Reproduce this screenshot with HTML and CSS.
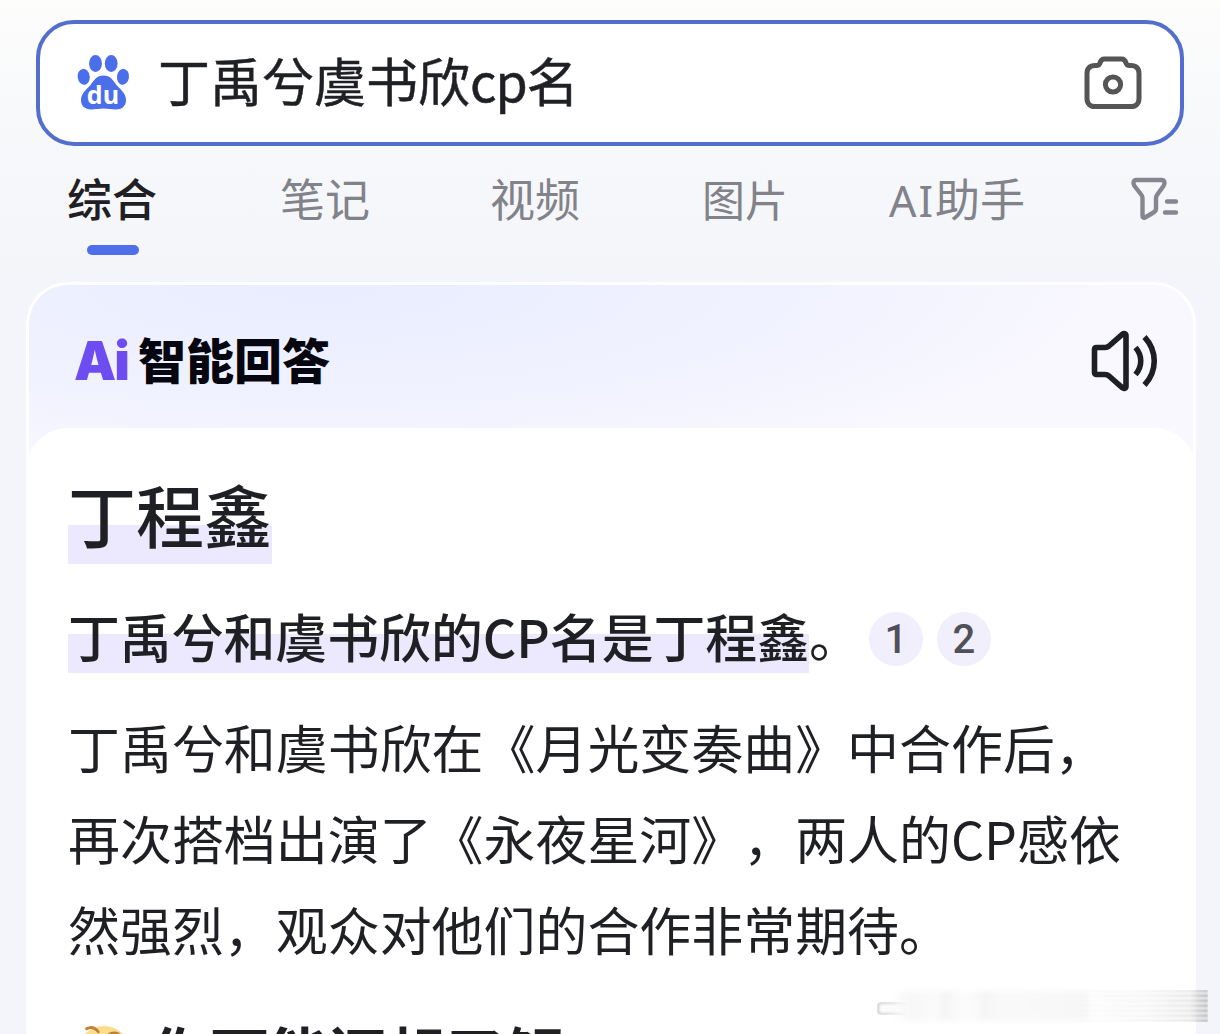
FILE: index.html
```html
<!DOCTYPE html>
<html lang="zh-CN">
<head>
<meta charset="utf-8">
<title>丁禹兮虞书欣cp名</title>
<link rel="stylesheet" href="styles.css">
</head>
<body>
<header class="search">
  <svg class="paw" width="54" height="58" viewBox="0 0 54 58">
    <g fill="#4b6eea">
      <ellipse cx="18.5" cy="9.5" rx="6.4" ry="8.4"/>
      <ellipse cx="34.2" cy="9.5" rx="6.4" ry="8.4"/>
      <ellipse cx="6.7" cy="22.8" rx="6" ry="8" transform="rotate(-8 6.7 22.8)"/>
      <ellipse cx="46" cy="22.8" rx="6" ry="8" transform="rotate(8 46 22.8)"/>
      <path d="M26.5 21.5c7 0 9.500 5 13 9.500 4 4.500 9.500 8.500 9.500 15 0 6.500-4.500 9.500-10 9.500-4.500 0-8-1-12.500-1s-8 1-12.500 1c-6 0-10-3.500-10-9.500 0-6.500 5.500-10.500 9.500-15 3.500-4.500 6-9.500 13-9.500z"/>
    </g>
    <text class="paw-text" x="26" y="50" text-anchor="middle">du</text>
  </svg>
  <div class="query">丁禹兮虞书欣<span class="query-latin">cp</span>名</div>
  <svg class="camera" width="60" height="56" viewBox="0 0 60 56" fill="none" stroke="#555" stroke-width="5">
    <path d="M12 10.500h1.500c2 0 3-1 3.500-2.500 .8-3 2-4 4.500-4h17c2.500 0 3.700 1 4.500 4 .5 1.500 1.500 2.500 3.500 2.500H48c5 0 8 3 8 8v25c0 5-3 8-8 8H12c-5 0-8-3-8-8v-25c0-5 3-8 8-8z" stroke-linejoin="round"/>
    <circle cx="30" cy="29.500" r="7.600"/>
  </svg>
</header>
<nav class="tabs">
  <div class="tab active">综合</div>
  <div class="tab">笔记</div>
  <div class="tab">视频</div>
  <div class="tab pics">图片</div>
  <div class="tab"><span class="tab-latin">AI</span>助手</div>
  <svg class="filter" width="50" height="46" viewBox="0 0 50 46" fill="none" stroke="#85868f" stroke-width="4.400" stroke-linecap="round" stroke-linejoin="round">
    <path d="M6.500 4h25c3 0 4 3 2 6l-6.500 9c-1 1.300-1 2-1 3.500v10c0 2-.6 3-2.500 4l-8.500 5c-1.500.8-2.500.2-2.500-1.500V22.500c0-1.500 0-2.200-1-3.500L4.500 10C2.500 7 3.500 4 6.500 4z"/>
    <path d="M37 25.500h9M35 36.500h11"/>
  </svg>
</nav>
<main class="card">
  <div class="card-head">
    <div class="brand"><span class="brand-ai">Ai</span><span class="brand-name">智能回答</span></div>
    <svg class="speaker" width="70" height="64" viewBox="0 0 70 64" fill="none" stroke="#1e1f24" stroke-width="5.600">
      <path d="M6.500 18.500h8.500c1.800 0 2.800-.5 4-1.500L32.500 5.200c1.300-1.200 3.500-.7 3.500 1.500v50.600c0 2.200-2.200 2.700-3.500 1.500L19 47c-1.200-1-2.200-1.500-4-1.500H6.500c-1.300 0-2-.7-2-2v-23c0-1.300.7-2 2-2z" stroke-linejoin="round"/>
      <path d="M45.500 18.500c7 8 7 19 0 27M54.500 8c13 14 13 34 0 48"/>
    </svg>
  </div>
  <section class="answer">
    <h1 class="title">丁程鑫</h1>
    <div class="lead">
      <strong class="mark">丁禹兮和虞书欣的CP名是丁程鑫</strong><span>。</span>
      <span class="ref">1</span><span class="ref">2</span>
    </div>
    <p class="text">丁禹兮和虞书欣在《月光变奏曲》中合作后，<br>再次搭档出演了《永夜星河》，两人的CP感依<br>然强烈，观众对他们的合作非常期待。</p>
    <div class="related">
      <svg class="emoji" width="54" height="54" viewBox="0 0 56 56">
        <defs><radialGradient id="face" cx=".5" cy=".45" r=".55"><stop offset="0" stop-color="#ffe9a0"/><stop offset=".8" stop-color="#fbdc8a"/><stop offset="1" stop-color="#eeb65a"/></radialGradient></defs>
        <circle cx="28" cy="28" r="27" fill="url(#face)"/>
        <path d="M10 4c5-3 9-1 12 3M33 10c4-3 9-2 12 1" fill="none" stroke="#c08238" stroke-width="3" stroke-linecap="round"/>
        <circle cx="19" cy="22" r="4" fill="#6b421c"/><circle cx="39" cy="22" r="4" fill="#6b421c"/>
      </svg>
      <h2 class="related-title">你可能还想了解</h2>
    </div>
  </section>
</main>
<div class="smudge"><i class="smudge-cap"></i><i class="smudge-body"></i><i class="smudge-end"></i></div>
</body>
</html>
```
FILE: styles.css
```css
* { box-sizing: border-box; }
body {
  margin: 0;
  height: 1034px;
  overflow: hidden;
  padding: 20px 24px 0 26px;
  background: linear-gradient(#fdfdfc 0, #f8f9fb 100px, #f5f6f9 240px, #f4f5fa 300px);
  color: #1f2024;
  font-family: "Noto Sans CJK SC", sans-serif;
  text-spacing-trim: space-all;
}
.search {
  display: flex;
  align-items: center;
  height: 126px;
  margin: 0 12px 0 10px;
  padding: 0 37px 0 36px;
  border: 4px solid #526fcd;
  border-radius: 38px;
  background: #fff;
}
.paw { flex: none; margin-left: 1px; }
.paw-text { font: 700 25px "Open Sans", sans-serif; fill: #fff; }
.query {
  flex: 1;
  margin-left: 27px;
  font-size: 52px;
  line-height: 80px;
  white-space: nowrap;
  margin-top: -6px;
  -webkit-text-stroke: .5px #1f2024;
}
.query-latin { letter-spacing: -1px; }
.camera { flex: none; }
.tabs {
  display: grid;
  grid-template-columns: 213px 210px 212px 187px 240px 60px;
  height: 109px;
  margin: 0 0 27px 41px;
  padding-top: 21px;
}
.tab {
  height: 88px;
  color: #81828a;
  font-size: 45px;
  line-height: 62px;
  white-space: nowrap;
}
.pics { font-size: 43px; }
.tab-latin { font-family: "Noto Sans", sans-serif; font-size: 43px; letter-spacing: 2px; }
.active { color: #1f2024; font-weight: 500; }
.active::after {
  content: "";
  display: block;
  width: 52px;
  height: 10px;
  margin: 16px 0 0 20px;
  border-radius: 5px;
  background: #4e6eea;
}
.filter { margin: 9px 0 0 1px; }
.card {
  height: 752px;
  overflow: hidden;
  border: 3px solid #fff;
  border-bottom: 0;
  border-radius: 42px 42px 0 0;
  background: radial-gradient(ellipse 800px 200px at 25% 0, #e9edff 0, #f1f2ff 60%, #f9f8ff 100%);
}
.card-head {
  display: flex;
  align-items: center;
  justify-content: space-between;
  height: 143px;
  padding: 8px 33px 0 45px;
}
.brand { display: flex; align-items: center; }
.brand-ai {
  width: 64px;
  color: #6d4df2;
  font: 900 53px/60px Inter, sans-serif;
  letter-spacing: -2px;
}
.brand-name { color: #05060f; font-size: 48px; font-weight: 900; line-height: 60px; margin-top: -5px; }
.answer {
  height: 606px;
  overflow: hidden;
  margin: 0 -3px;
  padding: 34px 42px 0;
  border-radius: 42px 42px 0 0;
  background: #fff;
}
.title {
  width: 204px;
  margin: 0;
  font-size: 68px;
  font-weight: 500;
  line-height: 104px;
  height: 102px;
  background: linear-gradient(transparent 63px, #ece8fe 63px);
}
.lead {
  display: flex;
  align-items: center;
  height: 76px;
  margin-top: 33px;
  font-size: 51.850px;
  line-height: 78px;
}
.mark {
  height: 76px;
  font-weight: 500;
  background: linear-gradient(transparent 37px, #ece8fe 37px);
}
.ref {
  width: 54px;
  height: 54px;
  margin: 8px 6px 0 8px;
  border-radius: 50%;
  background: #f1effc;
  color: #505158;
  font: 500 40px/55px Roboto, sans-serif;
  text-align: center;
}
.text {
  margin: 28px 0 0;
  font-size: 51.950px;
  line-height: 91px;
  white-space: nowrap;
}
.related { display: flex; align-items: center; margin-top: 38px; }
.emoji { flex: none; margin-left: 9px; }
.related-title {
  margin: 0 0 0 20px;
  font-size: 59px;
  font-weight: 700;
  line-height: 80px;
  white-space: nowrap;
}
.smudge {
  position: absolute;
  left: 877px;
  top: 990px;
  display: flex;
  align-items: center;
  width: 331px;
  height: 32px;
}
.smudge-cap {
  width: 40px;
  height: 13px;
  margin-top: 4px;
  border: 2px solid #c8c8c8;
  border-right: 0;
  border-radius: 4px 0 0 4px;
  background: #fafafa;
  filter: blur(1.200px);
  -webkit-mask-image: linear-gradient(90deg, #000, transparent);
  mask-image: linear-gradient(90deg, #000, transparent);
}
.smudge-body {
  flex: 1;
  height: 30px;
  margin-left: -25px;
  background: linear-gradient(90deg, transparent, #f7f7f7 10%, #fbfbfb 22%, #f4f4f4 28%, #fbfbfb 33%, #fbfbfb 42%, #f5f5f5 47%, #f9f9f9 55%, #f8f8f8 100%);
  filter: blur(3px);
}
.smudge-end {
  width: 150px;
  height: 32px;
  margin-left: -30px;
  background: repeating-linear-gradient(#999 0 1px, #fff 3px 4px, #999 5px);
  filter: blur(.8px);
  -webkit-mask-image: linear-gradient(90deg, transparent, rgba(0, 0, 0, .12) 60%, rgba(0, 0, 0, .3) 88%, rgba(0, 0, 0, .9));
  mask-image: linear-gradient(90deg, transparent, rgba(0, 0, 0, .12) 60%, rgba(0, 0, 0, .3) 88%, rgba(0, 0, 0, .9));
}
```
